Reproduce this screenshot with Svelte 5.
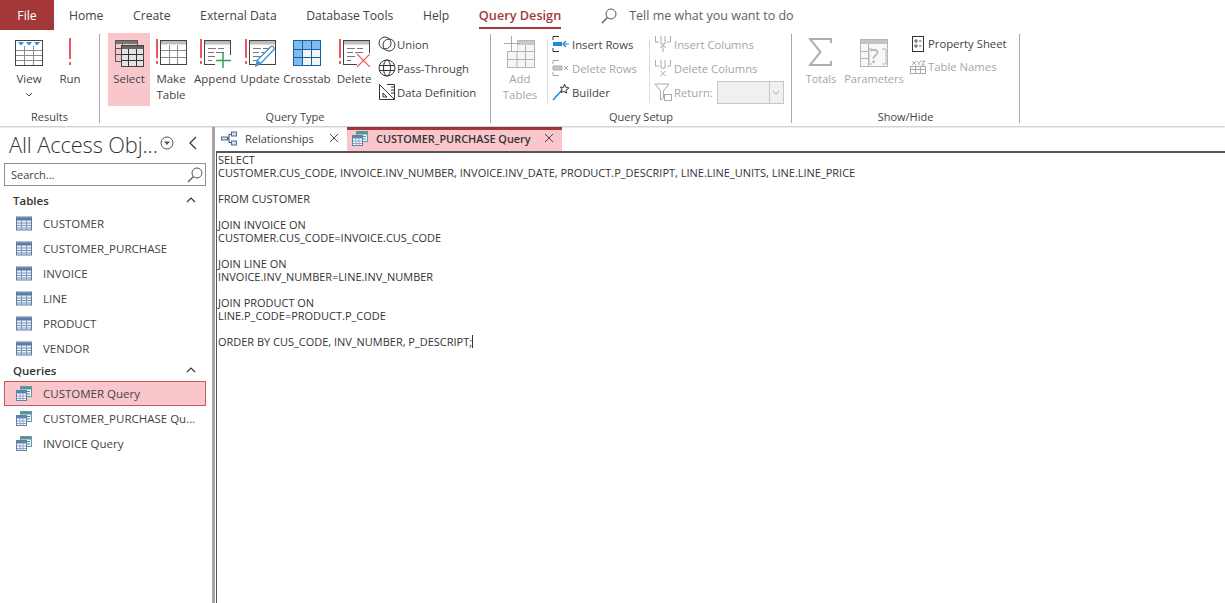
<script lang="ts">
  // Ribbon tabs across the top
  const tabs = ['Home', 'Create', 'External Data', 'Database Tools', 'Help'];

  const tables = ['CUSTOMER', 'CUSTOMER_PURCHASE', 'INVOICE', 'LINE', 'PRODUCT', 'VENDOR'];
  const queries = ['CUSTOMER Query', 'CUSTOMER_PURCHASE Qu...', 'INVOICE Query'];

  const sql = `SELECT
CUSTOMER.CUS_CODE, INVOICE.INV_NUMBER, INVOICE.INV_DATE, PRODUCT.P_DESCRIPT, LINE.LINE_UNITS, LINE.LINE_PRICE

FROM CUSTOMER

JOIN INVOICE ON
CUSTOMER.CUS_CODE=INVOICE.CUS_CODE

JOIN LINE ON
INVOICE.INV_NUMBER=LINE.INV_NUMBER

JOIN PRODUCT ON
LINE.P_CODE=PRODUCT.P_CODE

ORDER BY CUS_CODE, INV_NUMBER, P_DESCRIPT;`;
</script>

{#snippet queryLines()}
  <path d="M9 12.5H17M19 12.5H25M9 16.5H15M17 16.5H25M9 20.5H17M19 20.5H22M9 24.5H13" stroke="#777" />
{/snippet}

{#snippet bang()}
  <path d="M2 3V22" stroke="#f0565f" stroke-width="2" />
  <path d="M2 25V28" stroke="#f0565f" stroke-width="2" />
{/snippet}

{#snippet sheetFrame()}
  <rect x="5.5" y="4.5" width="26" height="24" stroke="#444" fill="#fff" />
  <rect x="6" y="5" width="25" height="3.5" fill="#bdbdbd" />
{/snippet}

{#snippet tableIcon()}
  <svg class="navicon" viewBox="0 0 16 14">
    <rect x="0.5" y="0.5" width="15" height="13" fill="#e8eef6" stroke="#5b7ba6" />
    <rect x="1" y="1" width="14" height="3" fill="#5b7ba6" />
    <path d="M1 6.5H15M1 9H15M1 11.5H15M5.5 4V13M10.5 4V13" stroke="#7d97bb" fill="none" />
  </svg>
{/snippet}

{#snippet queryIcon()}
  <svg class="navicon" viewBox="0 0 16 15">
    <rect x="4.5" y="0.5" width="11" height="10" fill="#f2f6f8" stroke="#5f9aa3" />
    <rect x="5" y="1" width="10" height="2.5" fill="#4f939d" />
    <path d="M11 5.5H14M11 8H14" stroke="#5f8095" />
    <rect x="0.5" y="4.5" width="10" height="10" fill="#fff" stroke="#5f82ad" />
    <rect x="1" y="5" width="9" height="2.5" fill="#5f82ad" />
    <path d="M1 10H10M1 12.5H10M4 7.5V14.500M7 7.5V14.500" stroke="#8ba3c4" fill="none" />
  </svg>
{/snippet}

{#snippet closeX()}
  <svg class="close" viewBox="0 0 10 10"><path d="M1 1L9 9M9 1L1 9" stroke="#444" fill="none" /></svg>
{/snippet}

{#snippet lens()}
  <svg class="lens" viewBox="0 0 16 16" fill="none" stroke="#555">
    <circle cx="10" cy="6" r="5" />
    <path d="M6.500 9.500L1 15" stroke-width="1.300" />
  </svg>
{/snippet}

<div class="app">
  <!-- Tab strip -->
  <nav class="tabstrip">
    <div class="file">File</div>
    {#each tabs as tab}
      <div class="tab">{tab}</div>
    {/each}
    <div class="tab current">Query Design</div>
    <div class="tellme">
      {@render lens()}
      <span>Tell me what you want to do</span>
    </div>
  </nav>

  <!-- Ribbon -->
  <div class="ribbon">
    <section class="group results">
      <div class="cmds">
        <div class="big-btn w-view">
          <svg class="big" viewBox="0 0 32 32" fill="none" stroke="#8a8a8a">
            <rect x="2.500" y="4.500" width="27" height="25" stroke="#444" fill="#fff" />
            <path d="M3 5H29V9H3Z" fill="#fff" stroke="none" />
            <path d="M5 6H11L8 9.500ZM13 6H19L16 9.500ZM21 6H27L24 9.500Z" fill="#2e8fd8" stroke="none" />
            <path d="M3 14.500H29M3 19.500H29M3 24.500H29M11.500 10V29M20.500 10V29" />
          </svg>
          <span>View</span>
          <svg class="caret" viewBox="0 0 8 5"><path d="M1 1L4 4L7 1" stroke="#555" fill="none" /></svg>
        </div>
        <div class="big-btn w-run">
          <svg class="big" viewBox="0 0 32 32" fill="none">
            <path d="M16 2V23" stroke="#f0565f" stroke-width="2" />
            <path d="M16 26V29" stroke="#f0565f" stroke-width="2" />
          </svg>
          <span>Run</span>
        </div>
      </div>
      <div class="label">Results</div>
    </section>

    <section class="group querytype">
      <div class="cmds">
        <div class="big-btn w-select on">
          <svg class="big" viewBox="0 0 32 32" fill="none" stroke="#555">
            <rect x="2.500" y="4.500" width="22" height="21" fill="#f3c9cd" />
            <rect x="3" y="5" width="21" height="3" fill="#777" stroke="none" />
            <path d="M3 12.500H12M3 18.500H8M9.500 8V14" />
            <rect x="8.500" y="9.500" width="22" height="21" fill="#e3e3e3" stroke="#444" />
            <rect x="9" y="10" width="21" height="3" fill="#666" stroke="none" />
            <path d="M9 18.500H30M9 24.500H30M15.500 13V30M23.500 13V30" stroke="#333" />
          </svg>
          <span>Select</span>
        </div>
        <div class="big-btn w-make">
          <svg class="big" viewBox="0 0 32 32" fill="none">
            {@render bang()}
            {@render sheetFrame()}
            <path d="M6 14.500H31M6 21.500H31M14.500 9V28M22.500 9V28" stroke="#8a8a8a" />
          </svg>
          <span>Make<br />Table</span>
        </div>
        <div class="big-btn w-wide">
          <svg class="big" viewBox="0 0 32 32" fill="none">
            {@render bang()}
            {@render sheetFrame()}
            {@render queryLines()}
            <rect x="16" y="19" width="16" height="13" fill="#fff" />
            <path d="M24 17V32M17 24.500H32" stroke="#2f9e57" stroke-width="1.500" />
          </svg>
          <span>Append</span>
        </div>
        <div class="big-btn w-wide">
          <svg class="big" viewBox="0 0 32 32" fill="none">
            {@render bang()}
            {@render sheetFrame()}
            {@render queryLines()}
            <path d="M12 30L13.500 24L27 10.500C28.500 9.500 31 11.500 30 13.500L17 27Z" fill="#fff" stroke="#3d8fd6" stroke-width="1.300" />
            <path d="M12 30L13.500 24L17 27Z" fill="#3d8fd6" />
          </svg>
          <span>Update</span>
        </div>
        <div class="big-btn w-cross">
          <svg class="big" viewBox="0 0 32 32">
            <rect x="2.500" y="4.500" width="27" height="25" fill="#f5f5f5" stroke="#0f62ae" />
            <path d="M3 5H29V13H3ZM3 13H11V29H3Z" fill="#82bbea" />
            <path d="M3 13.500H29M3 21.500H29M11.500 5V29M20.500 5V29" stroke="#0f62ae" fill="none" />
          </svg>
          <span>Crosstab</span>
        </div>
        <div class="big-btn w-wide">
          <svg class="big" viewBox="0 0 32 32" fill="none">
            {@render bang()}
            {@render sheetFrame()}
            {@render queryLines()}
            <rect x="19" y="17" width="13" height="14" fill="#fff" />
            <path d="M19 18L32 31M32 18L19 31" stroke="#ee5a5a" stroke-width="1.200" />
          </svg>
          <span>Delete</span>
        </div>
        <div class="smalls types">
          <div class="small">
            <svg class="si" viewBox="0 0 18 18" fill="none" stroke="#333">
              <circle cx="7" cy="8" r="6" /><circle cx="11" cy="10" r="6" />
            </svg>
            <span>Union</span>
          </div>
          <div class="small">
            <svg class="si" viewBox="0 0 18 18" fill="none" stroke="#333">
              <circle cx="9" cy="9" r="8" /><ellipse cx="9" cy="9" rx="3.500" ry="8" />
              <path d="M1.500 6.500H16.500M1.500 11.500H16.500" />
            </svg>
            <span>Pass-Through</span>
          </div>
          <div class="small">
            <svg class="si" viewBox="0 0 18 18" fill="none" stroke="#333">
              <path d="M1.500 1.500L16.500 16.500H1.500Z" /><path d="M5 10L9 14H5Z" />
              <path d="M9 1.500H16.500V16.500M13 4H16.500M13 7H16.500M13 10H16.500" />
            </svg>
            <span>Data Definition</span>
          </div>
        </div>
      </div>
      <div class="label">Query Type</div>
    </section>

    <section class="group setup">
      <div class="cmds">
        <div class="big-btn w-add dim">
          <svg class="big" viewBox="0 0 32 32" fill="none" stroke="#b5b5b5">
            <rect x="3.500" y="4.500" width="27" height="27" fill="#f6f6f6" />
            <rect x="4" y="5" width="26" height="4" fill="#c9c9c9" stroke="none" />
            <path d="M4 15.500H30M4 23.500H30M13 9V31M21.500 9V31" />
            <rect x="0" y="0" width="13" height="15" fill="#fff" stroke="none" />
            <path d="M7.500 0V15M0 7.500H16" stroke="#aaa" />
          </svg>
          <span>Add<br />Tables</span>
        </div>
        <div class="rule"></div>
        <div class="smalls rows">
          <div class="small">
            <svg class="si" viewBox="0 0 18 18" fill="none">
              <path d="M7 1.500H1V5M1 13V16.500H7" stroke="#333" />
              <path d="M1 7H10V11H1Z" fill="#1e8ad6" />
              <path d="M17 9H11M14 6L11 9L14 12" stroke="#1e8ad6" stroke-width="1.200" />
            </svg>
            <span>Insert Rows</span>
          </div>
          <div class="small dim">
            <svg class="si" viewBox="0 0 18 18" fill="none" stroke="#aaa">
              <path d="M7 1.500H1V5M1 13V16.500H7" />
              <path d="M1 7H10V11H1Z" fill="#c8c8c8" />
              <path d="M12 7L16 11M16 7L12 11" />
            </svg>
            <span>Delete Rows</span>
          </div>
          <div class="small">
            <svg class="si" viewBox="0 0 18 18" fill="none">
              <path d="M1 17L10 7" stroke="#1e8ad6" stroke-width="1.500" />
              <path d="M12.500 1L13.500 4L17 5L14 7L14.500 10L12 8.500L9 9.500L10 6.500L8.500 4L11.500 4.500Z" stroke="#333" fill="#fff" />
            </svg>
            <span>Builder</span>
          </div>
        </div>
        <div class="rule second"></div>
        <div class="smalls cols dim">
          <div class="small">
            <svg class="si" viewBox="0 0 18 18" fill="none" stroke="#aaa">
              <path d="M1.500 1V7H5M16.500 1V7H13M7 1V9H11V1" />
              <path d="M9 17V10M6 13L9 10L12 13" />
            </svg>
            <span>Insert Columns</span>
          </div>
          <div class="small">
            <svg class="si" viewBox="0 0 18 18" fill="none" stroke="#aaa">
              <path d="M1.500 1V7H5M16.500 1V7H13M7 1V9H11V1" />
              <path d="M6.500 12L11.500 17M11.500 12L6.500 17" />
            </svg>
            <span>Delete Columns</span>
          </div>
          <div class="small">
            <svg class="si" viewBox="0 0 18 18" fill="none" stroke="#aaa">
              <path d="M1 1H15L9.500 8V15L6.500 17V8Z" />
              <rect x="10.500" y="11.500" width="7" height="6" />
            </svg>
            <span>Return:</span>
            <div class="combo"><span class="combo-arrow"><svg viewBox="0 0 8 5"><path d="M1 1L4 4L7 1" stroke="#aaa" fill="none" /></svg></span></div>
          </div>
        </div>
      </div>
      <div class="label">Query Setup</div>
    </section>

    <section class="group showhide">
      <div class="cmds">
        <div class="big-btn w-totals dim">
          <svg class="big" viewBox="0 0 32 32" fill="none">
            <path d="M26 7V3H5L15.500 16L5 29H26V25" stroke="#b0b0b0" stroke-width="2" />
          </svg>
          <span>Totals</span>
        </div>
        <div class="big-btn w-params dim">
          <svg class="big" viewBox="0 0 32 32" fill="none" stroke="#b5b5b5">
            <rect x="2.500" y="3.500" width="27" height="27" fill="#f8f8f8" />
            <rect x="3" y="4" width="26" height="4" fill="#c4c4c4" stroke="none" />
            <path d="M3 15.500H10M3 22.500H10M10.500 8V30" />
            <path d="M14 13H11V28H14M24 13H28V28H24" />
          </svg>
          <b class="qmark">?</b>
          <span>Parameters</span>
        </div>
        <div class="smalls props">
          <div class="small">
            <svg class="si" viewBox="0 0 18 18" fill="none" stroke="#333">
              <rect x="3.500" y="1.500" width="11" height="15" />
              <path d="M6 5H8V7H6ZM6 10H8V12H6ZM10 6H12.500M10 11H12.500" stroke="#555" />
            </svg>
            <span>Property Sheet</span>
          </div>
          <div class="small dim">
            <svg class="si" viewBox="0 0 18 18" fill="none" stroke="#aaa">
              <rect x="1.500" y="8.500" width="15" height="7" />
              <path d="M1 11.500H17M6.500 9V15M11.500 9V15M3 3L7 7M7 3L3 7M8 3L10 5V7M12 3L10 5M12.500 3H16L12.500 7H16" />
            </svg>
            <span>Table Names</span>
          </div>
        </div>
      </div>
      <div class="label">Show/Hide</div>
    </section>
  </div>

  <div class="workspace">
    <!-- Navigation pane -->
    <aside class="pane">
      <div class="pane-head">
        <span class="pane-title">All Access Obj...</span>
        <svg class="pane-menu" viewBox="0 0 14 14" fill="none" stroke="#555">
          <circle cx="7" cy="7" r="6" />
          <path d="M4 5.500H10L7 9Z" fill="#555" stroke="none" />
        </svg>
        <svg class="pane-back" viewBox="0 0 8 14"><path d="M7 1L1 7L7 13" stroke="#333" stroke-width="1.200" fill="none" /></svg>
      </div>
      <div class="search">
        <span>Search...</span>
        {@render lens()}
      </div>

      <div class="section">
        <span>Tables</span>
        <svg viewBox="0 0 10 6"><path d="M1 5L5 1L9 5" stroke="#333" stroke-width="1.100" fill="none" /></svg>
      </div>
      {#each tables as name}
        <div class="item">
          {@render tableIcon()}
          <span>{name}</span>
        </div>
      {/each}

      <div class="section queries">
        <span>Queries</span>
        <svg viewBox="0 0 10 6"><path d="M1 5L5 1L9 5" stroke="#333" stroke-width="1.100" fill="none" /></svg>
      </div>
      {#each queries as name, i}
        <div class="item" class:selected={i === 0}>
          {@render queryIcon()}
          <span>{name}</span>
        </div>
      {/each}
    </aside>

    <div class="splitter"></div>

    <!-- Document area -->
    <main class="doc">
      <div class="doc-tabs">
        <div class="doc-tab rel">
          <svg class="navicon" viewBox="0 0 16 14" fill="none">
            <rect x="0.500" y="5.500" width="6" height="3" fill="#cfe0f2" stroke="#41719c" />
            <rect x="10.500" y="0.500" width="5" height="4" fill="#cfe0f2" stroke="#41719c" />
            <rect x="10.500" y="9.500" width="5" height="4" fill="#cfe0f2" stroke="#41719c" />
            <path d="M6 7H8V3H10M8 7V11H10" stroke="#444" />
          </svg>
          <span>Relationships</span>
          {@render closeX()}
        </div>
        <div class="doc-tab active">
          {@render queryIcon()}
          <span>CUSTOMER_PURCHASE Query</span>
          {@render closeX()}
        </div>
      </div>
      <pre class="sql">{sql}<i class="cursor"></i></pre>
    </main>
  </div>
</div>

<style>
  :global(body) {
    margin: 0;
    background: #fff;
  }

  .app {
    width: 1225px;
    height: 603px;
    display: flex;
    flex-direction: column;
    overflow: hidden;
    font-family: "Open Sans", "Liberation Sans", sans-serif;
    font-size: 11.5px;
    color: #444;
  }

  svg {
    display: block;
    flex: none;
  }

  /* tab strip */
  .tabstrip {
    height: 30px;
    flex: none;
    display: flex;
    align-items: flex-start;
    font-size: 12.2px;
  }

  .file {
    width: 54px;
    height: 30px;
    line-height: 31px;
    text-align: center;
    background: #a4373a;
    color: #fff;
  }

  .tab {
    height: 27px;
    line-height: 31px;
    padding-left: 15px;
    padding-right: 14.6px;
    white-space: nowrap;
    color: #444;
  }

  .tab.current {
    margin-left: 15px;
    padding: 0;
    font-size: 12.7px;
    color: #a4373a;
    font-weight: 600;
    border-bottom: 2.5px solid #a4373a;
  }

  .tellme {
    display: flex;
    align-items: center;
    gap: 12px;
    margin-left: 40px;
    height: 31px;
    color: #5f5f5f;
    font-size: 12.5px;
  }

  .lens {
    width: 16px;
    height: 16px;
  }

  /* ribbon */
  .ribbon {
    height: 96px;
    flex: none;
    display: flex;
    box-sizing: border-box;
    padding-top: 3px;
    box-shadow: 0 1px 2px rgba(0, 0, 0, 0.25);
    position: relative;
  }

  .group {
    display: flex;
    flex-direction: column;
    box-sizing: border-box;
    height: 89px;
    border-right: 1px solid #a8a8a8;
    margin-top: 1px;
  }

  .results { width: 100px; }
  .querytype { width: 391px; }
  .setup { width: 301px; }
  .showhide { width: 228px; }

  .cmds {
    flex: 1;
    display: flex;
    margin-top: -1px;
    padding-left: 8px;
  }

  .showhide .cmds { padding-left: 7px; }

  .label {
    height: 13px;
    line-height: 13px;
    text-align: center;
    font-size: 11px;
  }

  .big-btn {
    height: 73px;
    box-sizing: border-box;
    padding-top: 3px;
    display: flex;
    flex-direction: column;
    align-items: center;
    text-align: center;
    line-height: 16px;
    position: relative;
    flex: none;
  }

  .big-btn .big {
    width: 32px;
    height: 32px;
    margin-bottom: 3px;
  }

  .big-btn.on { background: #f9c7cb; }
  .w-view { width: 42px; }
  .w-run { width: 40px; }
  .w-select, .w-make { width: 42px; }
  .w-make { margin-right: 1px; }
  .w-wide { width: 44px; margin-right: 1px; }
  .w-cross { width: 48px; margin-right: 1px; }
  .w-add { width: 42px; margin-right: 4px; }
  .w-totals { width: 44px; font-size: 11px; }
  .w-params { width: 62px; font-size: 11px; }

  .caret {
    width: 8px;
    height: 5px;
    margin-top: 5px;
  }

  .dim, .dim span {
    color: #a6a6a6;
  }

  .smalls {
    display: flex;
    flex-direction: column;
    margin-top: -1px;
    font-size: 11.3px;
  }

  .types { margin-left: 1px; }
  .props { margin-left: 4px; }
  .props .small { height: 23px; }

  .small {
    height: 24px;
    display: flex;
    align-items: center;
    gap: 1px;
    white-space: nowrap;
  }

  .small .si {
    width: 18px;
    height: 18px;
  }

  .rule {
    width: 1px;
    height: 64px;
    margin: 6px 4px 0 2px;
    background: #dcdcdc;
  }

  .rows { width: 92px; }
  .rule.second { margin-left: 5px; margin-right: 4px; }
  .rows .small, .cols .small { gap: 2px; }

  .combo {
    width: 67px;
    height: 23px;
    margin-left: 2px;
    box-sizing: border-box;
    border: 1px solid #c6c6c6;
    background: #f0f0f0;
    display: flex;
    justify-content: flex-end;
  }

  .combo-arrow {
    width: 13px;
    border-left: 1px solid #c6c6c6;
    display: flex;
    align-items: center;
    justify-content: center;
  }

  .combo-arrow svg {
    width: 8px;
    height: 5px;
  }

  .qmark {
    position: absolute;
    top: 11px;
    left: 27px;
    font-weight: 400;
    font-size: 20px;
    line-height: 24px;
    color: #b0b0b0;
  }

  /* workspace */
  .workspace {
    flex: 1;
    display: flex;
    min-height: 0;
    padding-top: 1px;
  }

  .pane {
    width: 212px;
    flex: none;
    box-sizing: border-box;
    padding: 0 6px 0 4px;
  }

  .pane-head {
    height: 36px;
    display: flex;
    align-items: center;
    padding-left: 5px;
  }

  .pane-title {
    font-size: 21.8px;
    font-weight: 300;
    width: 151px;
    white-space: nowrap;
    color: #333;
    letter-spacing: -0.1px;
    margin-top: -2px;
  }

  .pane-menu {
    width: 14px;
    height: 14px;
    margin-top: -4px;
  }

  .pane-back {
    width: 8px;
    height: 14px;
    margin: -4px 0 0 15px;
  }

  .search {
    height: 23px;
    box-sizing: border-box;
    border: 1px solid #8f8f8f;
    display: flex;
    align-items: center;
    justify-content: space-between;
    padding: 0 2px 0 6px;
    color: #444;
    font-size: 11px;
  }

  .section {
    height: 25px;
    display: flex;
    align-items: center;
    justify-content: space-between;
    padding: 3px 10px 0 9px;
    box-sizing: border-box;
    font-weight: 600;
    color: #333;
  }

  .section.queries {
    height: 20px;
    padding-top: 0;
    padding-bottom: 2px;
  }

  .section svg {
    width: 10px;
    height: 6px;
  }

  .item {
    height: 25px;
    display: flex;
    align-items: center;
    gap: 11px;
    padding-left: 12px;
    box-sizing: border-box;
    white-space: nowrap;
  }

  .item.selected {
    background: #f9c7cb;
    border: 1px solid #c9585c;
    padding-left: 11px;
  }

  .navicon {
    width: 16px;
    height: 15px;
  }

  .splitter {
    width: 3px;
    flex: none;
    margin-right: 1px;
    background: #a6a6a6;
  }

  .doc {
    flex: 1;
    min-width: 0;
    display: flex;
    flex-direction: column;
  }

  .doc-tabs {
    height: 24px;
    flex: none;
    display: flex;
  }

  .doc-tab {
    display: flex;
    align-items: center;
    white-space: nowrap;
    box-sizing: border-box;
    font-size: 11px;
    padding-bottom: 2px;
  }

  .doc-tab.rel {
    width: 131px;
    padding-left: 5px;
    gap: 8px;
  }

  .doc-tab.active {
    width: 215px;
    padding-left: 5px;
    padding-bottom: 5px;
    gap: 8px;
    background: #f9c7cb;
    border-top: 3px solid #a4373a;
    font-size: 10.9px;
    font-weight: 600;
    color: #333;
  }

  .close {
    width: 10px;
    height: 10px;
    margin-left: auto;
    margin-right: 8px;
  }

  .sql {
    flex: 1;
    margin: 0;
    padding: 0 0 0 1px;
    border-top: 2px solid #555;
    border-left: 1.5px solid #555;
    font-family: inherit;
    font-size: 10.97px;
    line-height: 13px;
    color: #333;
    white-space: pre;
  }

  .cursor {
    display: inline-block;
    width: 1px;
    height: 13px;
    background: #333;
    vertical-align: top;
  }
</style>
